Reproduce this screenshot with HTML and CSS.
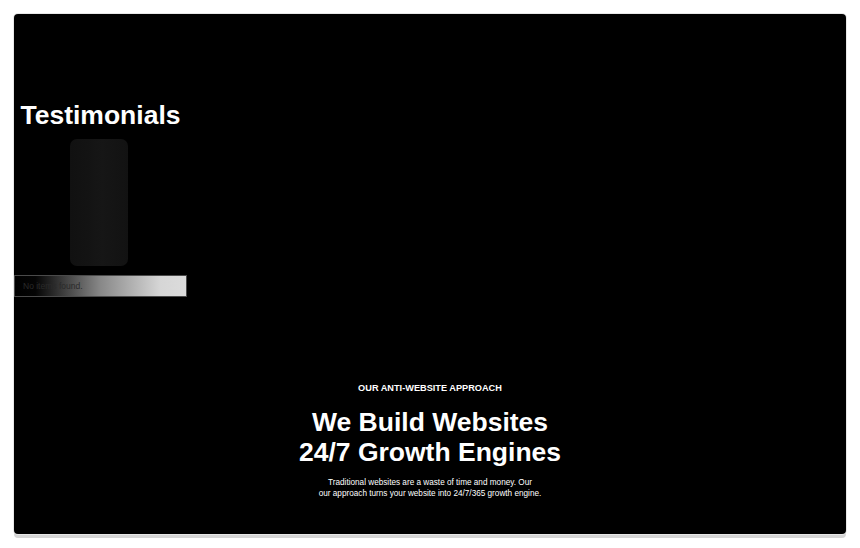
FILE: index.html
```html
<!DOCTYPE html>
<html lang="en">
<head>
<meta charset="utf-8">
<title>Testimonials</title>
<link rel="stylesheet" href="styles.css">
</head>
<body>
<main class="panel">
  <section class="testimonials">
    <h2 class="testimonials-title">Testimonials</h2>
    <div class="skeleton-card"></div>
    <div class="empty-bar">No items found.</div>
  </section>
  <section class="approach">
    <p class="eyebrow">OUR ANTI-WEBSITE APPROACH</p>
    <h1 class="approach-title">We Build Websites<br>24/7 Growth Engines</h1>
    <p class="approach-text">Traditional websites are a waste of time and money. Our<br>our approach turns your website into 24/7/365 growth engine.</p>
  </section>
</main>
</body>
</html>
```
FILE: styles.css
```css
* { box-sizing: border-box; }
html, body { margin: 0; padding: 0; background: #ffffff; }
body {
  font-family: "Liberation Sans", Arial, sans-serif;
  padding: 14px;
  height: 548px;
}
.panel {
  background: #000;
  color: #fff;
  height: 520px;
  border-radius: 4px;
  box-shadow: 0 0 0 1px #e8e8e8, 0 4px 0 0 #d6d6d6;
  display: flex;
  flex-direction: column;
  padding-top: 86px;
}
.testimonials {
  width: 173px;
  display: flex;
  flex-direction: column;
  align-items: center;
}
.testimonials-title {
  margin: 0;
  font-size: 26.5px;
  line-height: 30px;
  font-weight: 700;
  text-align: center;
}
.skeleton-card {
  margin-top: 9px;
  margin-right: 3px;
  width: 58px;
  height: 127px;
  border-radius: 7px;
  background: linear-gradient(90deg, #111 0%, #131313 30%, #161616 55%, #121212 100%);
}
.empty-bar {
  margin-top: 9px;
  align-self: stretch;
  height: 22px;
  padding-left: 8px;
  font-size: 8.5px;
  line-height: 20px;
  color: #2a2a2a;
  background: linear-gradient(90deg, #000 0%, #050505 12%, #888 50%, #d6d6d6 85%, #dcdcdc 100%);
  border: 1px solid #4a4a4a;
}
.approach {
  margin-top: 85px;
  display: flex;
  flex-direction: column;
  align-items: center;
  text-align: center;
}
.eyebrow {
  margin: 0;
  font-size: 9.2px;
  line-height: 12px;
  font-weight: 700;
}
.approach-title {
  margin: 13px 0 0;
  font-size: 26.5px;
  line-height: 30px;
  font-weight: 700;
}
.approach-text {
  margin: 10px 0 0;
  font-size: 8.2px;
  line-height: 11px;
}
```
